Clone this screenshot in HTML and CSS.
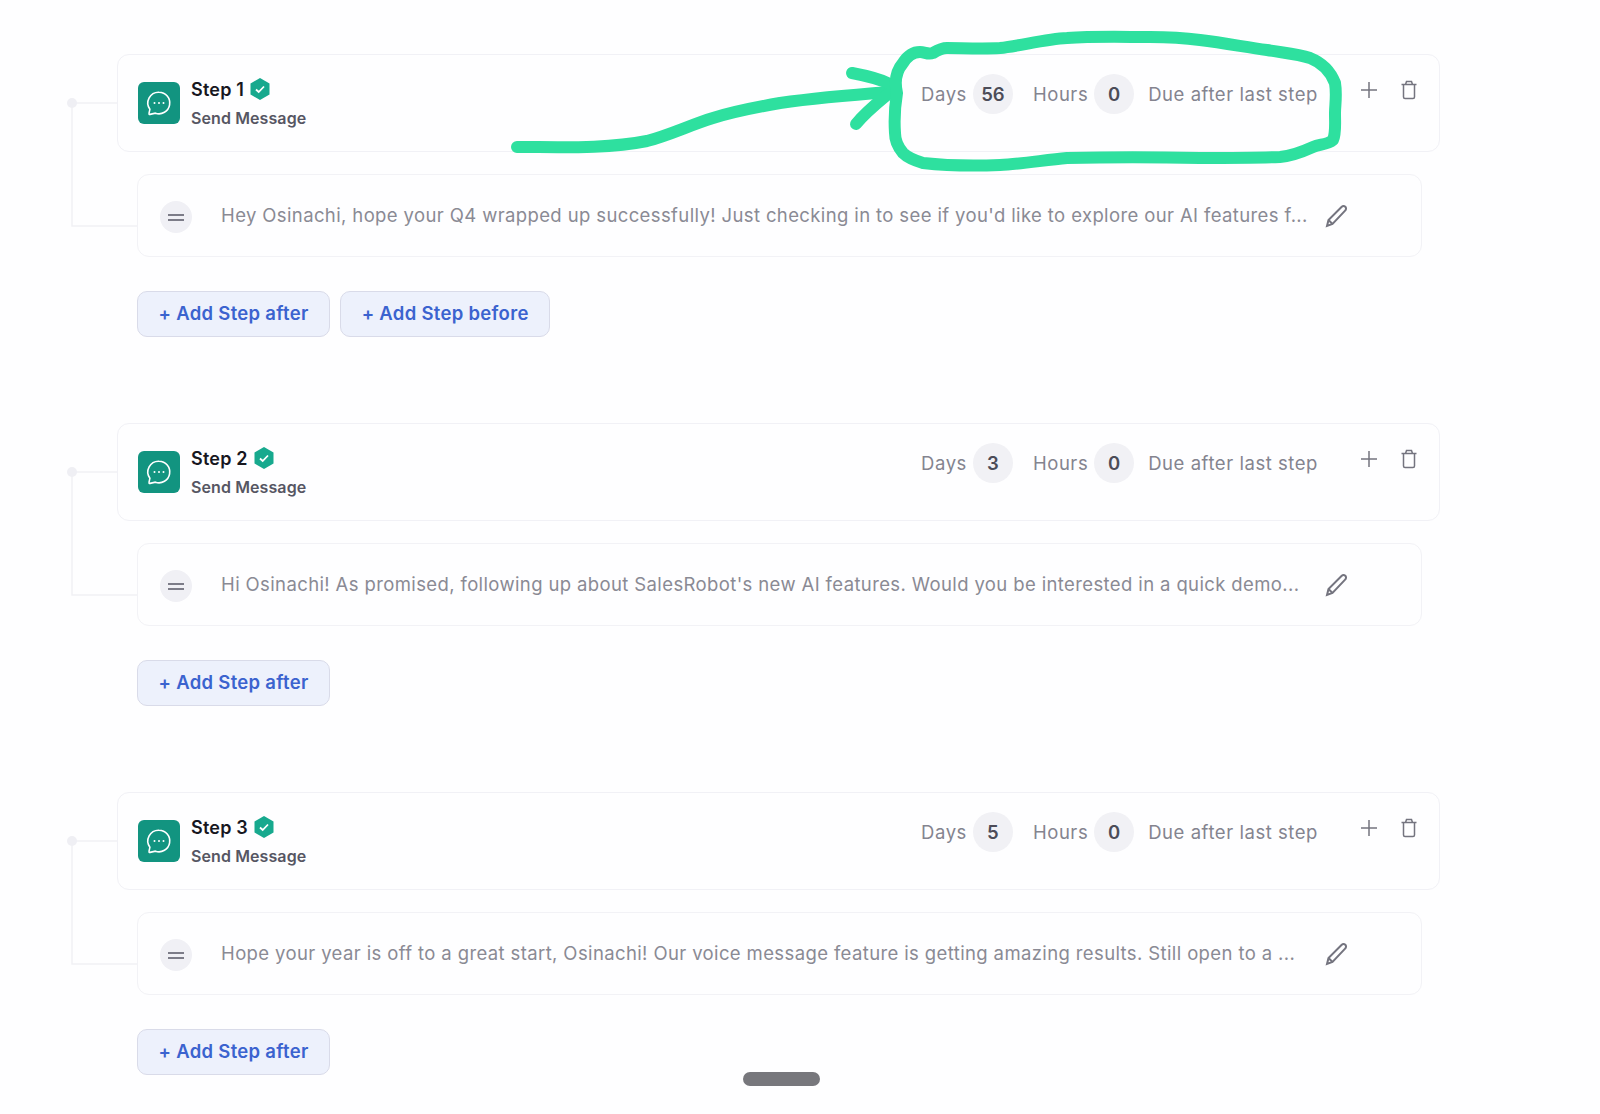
FILE: index.html
```html
<!DOCTYPE html>
<html lang="en">
<head>
<meta charset="utf-8">
<title>Sequence steps</title>
<link rel="stylesheet" href="styles.css">
</head>
<body>
<main class="sequence">
  <section class="step">
    <svg class="connector" width="80" height="140" viewBox="0 0 80 140"><path d="M7 11H73M7 11V134H72" fill="none" stroke="#f1f1f5" stroke-width="1.5"/><circle cx="7" cy="11" r="5" fill="#efeff4"/></svg>
    <div class="card">
      <div class="app-icon"><svg width="28" height="28" viewBox="0 0 28 28" fill="none" stroke="#fff" stroke-width="1.6"><path d="M14 3.2a10.8 10.8 0 1 1-3.6 21L5 25.4c-.7.2-1.2-.4-1-1l.9-4.1A10.8 10.8 0 0 1 14 3.2z"/><circle cx="9.5" cy="14" r="1" fill="#fff" stroke="none"/><circle cx="14" cy="14" r="1" fill="#fff" stroke="none"/><circle cx="18.5" cy="14" r="1" fill="#fff" stroke="none"/></svg></div>
      <div class="titles">
        <div class="title">Step 1 <svg class="verified" width="20" height="22" viewBox="0 0 20 22"><path d="M10 0l9.500 5.500v11L10 22 .5 16.500v-11z" fill="#17a98e"/><path d="M6 11.500l2.700 2.500L14 8.500" fill="none" stroke="#fff" stroke-width="1.800"/></svg></div>
        <div class="subtitle">Send Message</div>
      </div>
      <div class="timing">
        <span class="label">Days</span><span class="pill">56</span>
        <span class="label hours">Hours</span><span class="pill">0</span>
        <span class="label due">Due after last step</span>
      </div>
      <div class="actions">
        <svg width="20" height="20" viewBox="0 0 20 20" stroke="#74747f" stroke-width="1.500"><path d="M10 2v16M2 10h16"/></svg>
        <svg width="18" height="20" viewBox="0 0 18 20" fill="none" stroke="#74747f" stroke-width="1.500"><path d="M1.500 4.500h15M3.500 4.500V17a1.500 1.500 0 0 0 1.500 1.500h8a1.500 1.500 0 0 0 1.500-1.500V4.500M5.500 4.500L6.500 1.500h5l1 3"/></svg>
      </div>
    </div>
    <div class="message">
      <span class="drag"><span class="bars"></span></span>
      <p class="text">Hey Osinachi, hope your Q4 wrapped up successfully! Just checking in to see if you'd like to explore our AI features f...</p>
      <svg class="pencil" width="24" height="24" viewBox="0 0 24 24" fill="none" stroke="#74747f" stroke-width="2"><path d="M3 22l1.500-6L17.500 3c1.200-1.200 2.800-1.200 3.800-.2s1 2.600-.2 3.800L8.500 20z"/><path d="M4.500 16l4 4"/></svg>
    </div>
    <div class="buttons">
      <button class="add">+ Add Step after</button>
      <button class="add">+ Add Step before</button>
    </div>
  </section>

  <section class="step">
    <svg class="connector" width="80" height="140" viewBox="0 0 80 140"><path d="M7 11H73M7 11V134H72" fill="none" stroke="#f1f1f5" stroke-width="1.5"/><circle cx="7" cy="11" r="5" fill="#efeff4"/></svg>
    <div class="card">
      <div class="app-icon"><svg width="28" height="28" viewBox="0 0 28 28" fill="none" stroke="#fff" stroke-width="1.6"><path d="M14 3.2a10.8 10.8 0 1 1-3.6 21L5 25.4c-.7.2-1.2-.4-1-1l.9-4.1A10.8 10.8 0 0 1 14 3.2z"/><circle cx="9.5" cy="14" r="1" fill="#fff" stroke="none"/><circle cx="14" cy="14" r="1" fill="#fff" stroke="none"/><circle cx="18.5" cy="14" r="1" fill="#fff" stroke="none"/></svg></div>
      <div class="titles">
        <div class="title">Step 2 <svg class="verified" width="20" height="22" viewBox="0 0 20 22"><path d="M10 0l9.500 5.500v11L10 22 .5 16.500v-11z" fill="#17a98e"/><path d="M6 11.500l2.700 2.500L14 8.500" fill="none" stroke="#fff" stroke-width="1.800"/></svg></div>
        <div class="subtitle">Send Message</div>
      </div>
      <div class="timing">
        <span class="label">Days</span><span class="pill">3</span>
        <span class="label hours">Hours</span><span class="pill">0</span>
        <span class="label due">Due after last step</span>
      </div>
      <div class="actions">
        <svg width="20" height="20" viewBox="0 0 20 20" stroke="#74747f" stroke-width="1.500"><path d="M10 2v16M2 10h16"/></svg>
        <svg width="18" height="20" viewBox="0 0 18 20" fill="none" stroke="#74747f" stroke-width="1.500"><path d="M1.500 4.500h15M3.500 4.500V17a1.500 1.500 0 0 0 1.500 1.500h8a1.500 1.500 0 0 0 1.500-1.500V4.500M5.500 4.500L6.500 1.500h5l1 3"/></svg>
      </div>
    </div>
    <div class="message">
      <span class="drag"><span class="bars"></span></span>
      <p class="text">Hi Osinachi! As promised, following up about SalesRobot's new AI features. Would you be interested in a quick demo...</p>
      <svg class="pencil" width="24" height="24" viewBox="0 0 24 24" fill="none" stroke="#74747f" stroke-width="2"><path d="M3 22l1.500-6L17.500 3c1.200-1.200 2.800-1.200 3.800-.2s1 2.600-.2 3.800L8.500 20z"/><path d="M4.500 16l4 4"/></svg>
    </div>
    <div class="buttons">
      <button class="add">+ Add Step after</button>
    </div>
  </section>

  <section class="step">
    <svg class="connector" width="80" height="140" viewBox="0 0 80 140"><path d="M7 11H73M7 11V134H72" fill="none" stroke="#f1f1f5" stroke-width="1.5"/><circle cx="7" cy="11" r="5" fill="#efeff4"/></svg>
    <div class="card">
      <div class="app-icon"><svg width="28" height="28" viewBox="0 0 28 28" fill="none" stroke="#fff" stroke-width="1.6"><path d="M14 3.2a10.8 10.8 0 1 1-3.6 21L5 25.4c-.7.2-1.2-.4-1-1l.9-4.1A10.8 10.8 0 0 1 14 3.2z"/><circle cx="9.5" cy="14" r="1" fill="#fff" stroke="none"/><circle cx="14" cy="14" r="1" fill="#fff" stroke="none"/><circle cx="18.5" cy="14" r="1" fill="#fff" stroke="none"/></svg></div>
      <div class="titles">
        <div class="title">Step 3 <svg class="verified" width="20" height="22" viewBox="0 0 20 22"><path d="M10 0l9.500 5.500v11L10 22 .5 16.500v-11z" fill="#17a98e"/><path d="M6 11.500l2.700 2.500L14 8.500" fill="none" stroke="#fff" stroke-width="1.800"/></svg></div>
        <div class="subtitle">Send Message</div>
      </div>
      <div class="timing">
        <span class="label">Days</span><span class="pill">5</span>
        <span class="label hours">Hours</span><span class="pill">0</span>
        <span class="label due">Due after last step</span>
      </div>
      <div class="actions">
        <svg width="20" height="20" viewBox="0 0 20 20" stroke="#74747f" stroke-width="1.500"><path d="M10 2v16M2 10h16"/></svg>
        <svg width="18" height="20" viewBox="0 0 18 20" fill="none" stroke="#74747f" stroke-width="1.500"><path d="M1.500 4.500h15M3.500 4.500V17a1.500 1.500 0 0 0 1.500 1.500h8a1.500 1.500 0 0 0 1.500-1.500V4.500M5.500 4.500L6.500 1.500h5l1 3"/></svg>
      </div>
    </div>
    <div class="message">
      <span class="drag"><span class="bars"></span></span>
      <p class="text">Hope your year is off to a great start, Osinachi! Our voice message feature is getting amazing results. Still open to a ...</p>
      <svg class="pencil" width="24" height="24" viewBox="0 0 24 24" fill="none" stroke="#74747f" stroke-width="2"><path d="M3 22l1.500-6L17.500 3c1.200-1.200 2.800-1.200 3.800-.2s1 2.600-.2 3.800L8.500 20z"/><path d="M4.500 16l4 4"/></svg>
    </div>
    <div class="buttons">
      <button class="add">+ Add Step after</button>
    </div>
  </section>
</main>

<svg class="scribble" width="1600" height="1114" viewBox="0 0 1600 1114" fill="none" stroke="#2ee09f" stroke-width="12" stroke-linecap="round" stroke-linejoin="round">
  <path d="M517 147C560 147 607 149 647 141C670 135 690 125 713 118C735 111 757 107 780 103C815 98 850 95 890 92"/>
  <path d="M852 73C868 76 880 79 890 84M856 124C866 112 876 104 887 95"/>
  <path d="M897 93C894 80 897 70 903 63C908 55 913 52 920 52C925 52 928 55 933 53C938 50 942 48 947 48C960 48 985 49 1000 48C1020 46 1045 39 1067 38C1095 36 1125 37 1150 37C1170 37 1185 38 1200 40C1225 43 1245 47 1267 50C1285 53 1298 54 1310 58C1320 62 1330 70 1335 83C1337 95 1335 105 1335 113C1335 125 1336 133 1333 140C1327 145 1320 144 1313 147C1302 152 1292 156 1280 157C1255 158 1225 158 1200 158C1155 157 1110 157 1067 158C1045 160 1020 164 1000 165C975 166 950 166 923 163C913 160 907 157 903 153C897 146 895 140 895 133C894 118 895 105 897 93"/>
</svg>
<div class="scroll-handle"></div>
</body>
</html>
```
FILE: styles.css
```css
* { box-sizing: border-box; }
html, body { margin: 0; padding: 0; }
body {
  height: 1114px;
  overflow: hidden;
  background: #fefeff;
  font-family: Inter, "Open Sans", sans-serif;
  color: #74747f;
}
.sequence { width: 1323px; margin-left: 117px; padding-top: 54px; }
.step { position: relative; padding-bottom: 86px; }
.connector { position: absolute; left: -52px; top: 38px; }
.card {
  position: relative;
  display: flex;
  align-items: flex-start;
  height: 98px;
  padding: 27px 21px 0 20px;
  background: #fefeff;
  border: 1px solid #f1f1f6;
  border-radius: 12px;
}
.app-icon {
  display: flex;
  align-items: center;
  justify-content: center;
  width: 42px;
  height: 42px;
  margin-right: 11px;
  background: #129480;
  border-radius: 6px;
}
.titles { display: flex; flex-direction: column; gap: 7px; margin-top: -5px; }
.title {
  display: flex;
  align-items: center;
  gap: 6px;
  height: 24px;
  font-size: 18px;
  font-weight: 600;
  letter-spacing: .2px;
  color: #17171f;
}
.subtitle { font-size: 16px; font-weight: 600; letter-spacing: .1px; color: #565663; }
.timing {
  display: flex;
  align-items: center;
  margin-left: auto;
  margin-top: -8px;
  font-size: 18.5px;
  letter-spacing: .55px;
  color: #84848f;
}
.pill {
  display: flex;
  align-items: center;
  justify-content: center;
  width: 40px;
  height: 40px;
  margin-left: 6px;
  background: #f1f1f5;
  border-radius: 50%;
  font-weight: 600;
  letter-spacing: 0;
  color: #4c4c58;
}
.hours { margin-left: 20px; }
.due { margin-left: 14px; }
.actions {
  display: flex;
  align-items: center;
  gap: 21px;
  margin-left: 41px;
  margin-top: -2px;
}
.message {
  display: flex;
  align-items: center;
  height: 83px;
  margin: 22px 18px 34px 20px;
  padding-left: 22px;
  background: #fefeff;
  border: 1px solid #f2f2f6;
  border-radius: 12px;
}
.drag {
  display: flex;
  flex: none;
  align-items: center;
  justify-content: center;
  width: 32px;
  height: 32px;
  margin-top: 3px;
  background: #f0f0f5;
  border-radius: 50%;
}
.bars {
  width: 16px;
  height: 7px;
  border-top: 2px solid #7c7c88;
  border-bottom: 2px solid #7c7c88;
}
.text {
  flex: none;
  width: 1076px;
  margin: -2px 0 0 29px;
  font-size: 18.5px;
  letter-spacing: .38px;
  white-space: nowrap;
  color: #8a8a94;
}
.pencil { margin-left: 27px; margin-top: 1px; }
.buttons { display: flex; gap: 10px; margin-left: 20px; }
.add {
  height: 46px;
  padding: 0 20.5px 3px;
  background: #edf1fc;
  border: 1px solid #d9dbe9;
  border-radius: 10px;
  font-family: inherit;
  font-size: 18.5px;
  font-weight: 600;
  letter-spacing: .3px;
  color: #3b63cf;
}
.scribble { position: absolute; left: 0; top: 0; pointer-events: none; }
.scroll-handle {
  position: absolute;
  left: 743px;
  top: 1072px;
  width: 77px;
  height: 14px;
  background: #77777c;
  border-radius: 7px;
}
```
